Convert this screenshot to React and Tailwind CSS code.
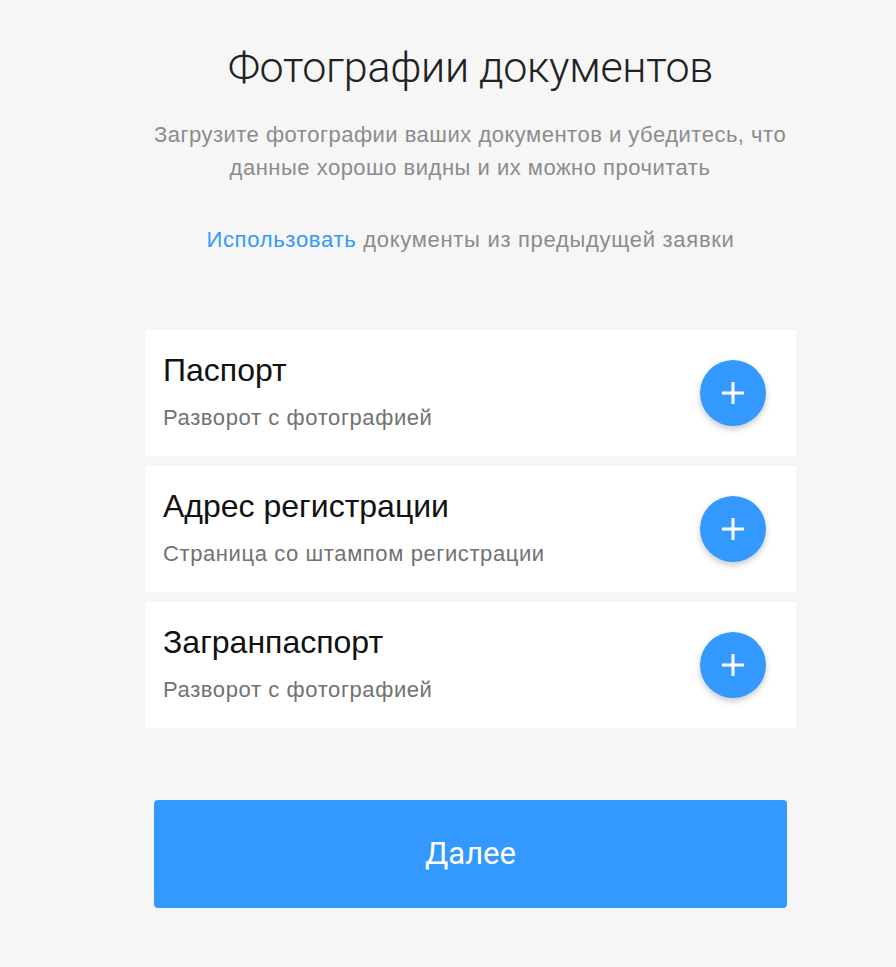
const docs = [
  { title: 'Паспорт', hint: 'Разворот с фотографией' },
  { title: 'Адрес регистрации', hint: 'Страница со штампом регистрации' },
  { title: 'Загранпаспорт', hint: 'Разворот с фотографией' },
]

function PlusButton() {
  return (
    <button className="flex h-[66px] w-[66px] shrink-0 items-center justify-center rounded-full bg-[#3399ff] shadow-[0_3px_6px_rgba(0,0,0,0.22)]">
      <svg width="24" height="24" viewBox="0 0 24 24" fill="none" stroke="#fff" strokeWidth="3">
        <path d="M12 1v22M1 12h22" />
      </svg>
    </button>
  )
}

export default function App() {
  return (
    <div className="min-h-[967px] bg-[#f6f6f6] font-['Liberation_Sans',Arial,sans-serif]">
      <div className="ml-[145px] w-[651px] pt-[43px]">
        <h1 className="text-center font-['Roboto',sans-serif] text-[43px] font-light leading-[48px] tracking-[-0.3px] text-[#222]">
          Фотографии документов
        </h1>
        <p className="-ml-[25px] mt-[27px] w-[700px] text-center text-[22px] leading-[33px] tracking-[0.5px] text-[#8c8c8c]">
          Загрузите фотографии ваших документов и убедитесь, что
          <br />
          данные хорошо видны и их можно прочитать
        </p>
        <p className="mt-[39px] text-center text-[22px] leading-[33px] tracking-[0.7px] text-[#8c8c8c]">
          <a className="text-[#3399ff]">Использовать</a> документы из предыдущей заявки
        </p>

        <div className="mt-[74px] flex flex-col gap-[10px]">
          {docs.map((d) => (
            <div key={d.title} className="flex h-[126px] items-center justify-between bg-white pl-[18px] pr-[30px]">
              <div className="flex flex-col self-start pt-[22px]">
                <span className="text-[32px] leading-[36px] text-[#111]">{d.title}</span>
                <span className="mt-[18px] text-[22px] leading-[24px] tracking-[0.6px] text-[#727272]">{d.hint}</span>
              </div>
              <PlusButton />
            </div>
          ))}
        </div>

        <button className="mx-auto mt-[72px] flex h-[108px] w-[633px] items-center justify-center rounded-[4px] bg-[#3399ff] font-['Roboto',sans-serif] text-[31px] text-white">
          Далее
        </button>
      </div>
    </div>
  )
}
